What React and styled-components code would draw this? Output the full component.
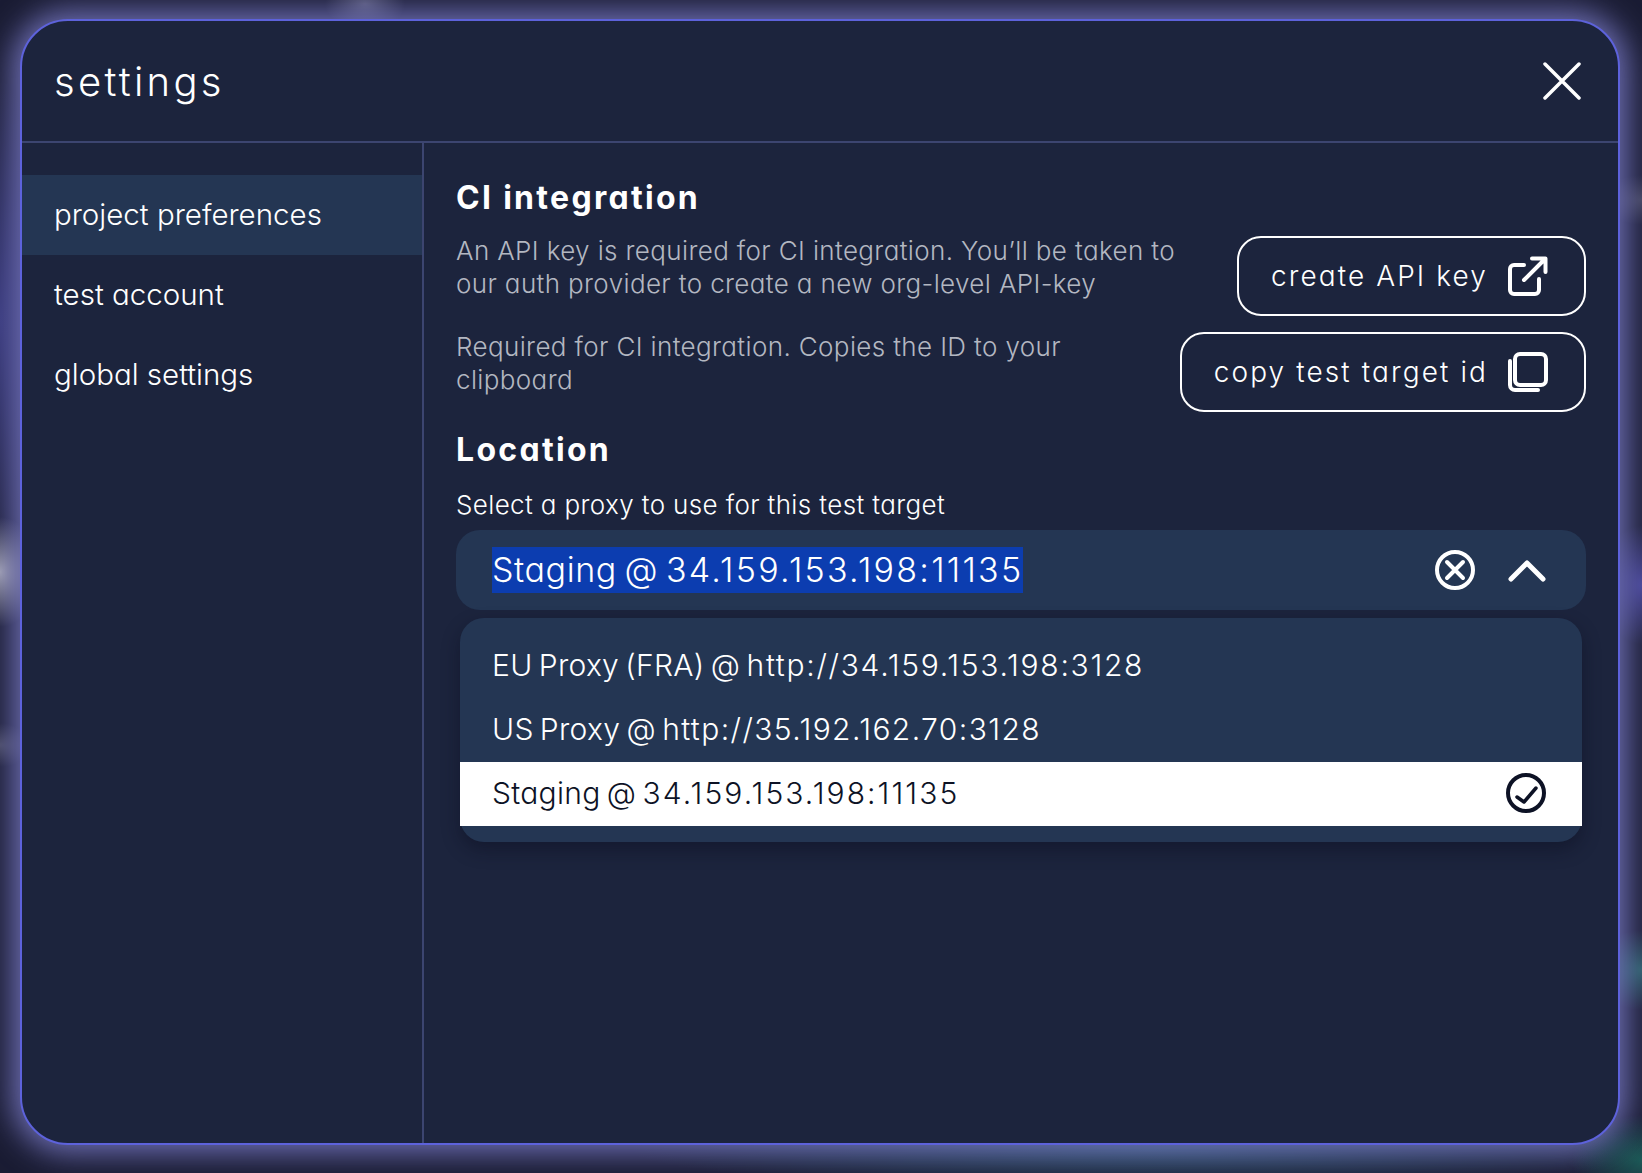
// Packages
import React from "react"
import styled, { createGlobalStyle } from "styled-components"

const FONT = `"Inter", "Lato", "Liberation Sans", sans-serif`

// Styles
const GlobalStyle = createGlobalStyle`
    html, body {
        margin: 0;
        height: 100%;
        background-color: #1a1c33;
        background-image:
            radial-gradient(40px 55px at 0 572px, rgba(205, 205, 215, 0.75), transparent),
            radial-gradient(30px 22px at 0 745px, rgba(170, 170, 190, 0.3), transparent),
            radial-gradient(45px 240px at 0 320px, rgba(70, 70, 170, 0.55), transparent),
            radial-gradient(40px 60px at 1642px 585px, rgba(95, 90, 210, 0.6), transparent),
            radial-gradient(40px 25px at 1642px 200px, rgba(170, 170, 190, 0.25), transparent),
            radial-gradient(40px 26px at 365px 4px, rgba(190, 190, 225, 0.35), transparent),
            radial-gradient(50px 40px at 1642px 970px, rgba(60, 190, 170, 0.4), transparent),
            radial-gradient(70px 45px at 1642px 1160px, rgba(30, 130, 110, 0.6), transparent),
            radial-gradient(520px 40px at 1150px 1150px, rgba(50, 120, 140, 0.45), transparent);
    }

    * {
        box-sizing: border-box;
    }
`

const Page = styled.div`
    width: 1642px;
    height: 1173px;
    padding: 19px 22px 28px 20px;
    overflow: hidden;
    font-family: ${FONT};
    font-feature-settings: "cv11" 1;
    color: #fff;
`

const Modal = styled.div`
    height: 100%;
    display: flex;
    flex-direction: column;
    background-color: #1c243d;
    border: 2px solid #5d62db;
    border-radius: 48px;
    box-shadow: 0 0 30px 8px rgba(130, 130, 210, 0.8);
`

const Header = styled.header`
    height: 122px;
    flex: none;
    display: flex;
    align-items: center;
    justify-content: space-between;
    padding: 0 37px 0 32px;
    border-bottom: 2px solid #3c4570;
`

const Title = styled.h1`
    margin: 0;
    font-size: 40px;
    font-weight: 300;
    letter-spacing: 3.3px;
`

const CloseButton = styled.button`
    display: flex;
    padding: 0;
    border: none;
    background: none;
    color: #fff;
`

const Body = styled.div`
    flex: 1;
    display: flex;
    min-height: 0;
`

const Sidebar = styled.nav`
    width: 402px;
    flex: none;
    padding-top: 32px;
    border-right: 2px solid #3c4570;
`

const NavItem = styled.div`
    height: 80px;
    display: flex;
    align-items: center;
    padding: 0 0 2px 32px;
    font-size: 29.5px;
    font-weight: 300;
    background-color: ${({ $active }) => ($active ? "#243653" : "transparent")};
`

const Content = styled.main`
    flex: 1;
    padding: 35px 32px 0 32px;
`

const SectionTitle = styled.h2`
    margin: 0 0 18px;
    font-size: 32px;
    line-height: 40px;
    font-weight: 700;
    letter-spacing: 2.3px;
`

const Row = styled.div`
    display: flex;
    justify-content: space-between;
    align-items: flex-start;
    margin-bottom: ${({ $gap }) => $gap}px;
`

const Hint = styled.p`
    margin: -2px 0 0;
    width: ${({ $width }) => $width}px;
    font-size: 26px;
    line-height: 33px;
    font-weight: 300;
    letter-spacing: 0.37px;
    color: #b3b7c1;
`

const OutlineButton = styled.button`
    height: 80px;
    display: flex;
    align-items: center;
    gap: 20px;
    padding: 0 36px 0 32px;
    border: 2px solid #fff;
    border-radius: 24px;
    background: none;
    color: #fff;
    font: inherit;
    font-size: 28px;
    font-weight: 300;
    letter-spacing: 2.1px;
`

const Label = styled.div`
    margin-bottom: 9px;
    font-size: 26px;
    line-height: 33px;
    font-weight: 300;
    letter-spacing: 0.37px;
`

const Select = styled.div`
    height: 80px;
    display: flex;
    align-items: center;
    padding: 0 40px 0 36px;
    border-radius: 24px;
    background-color: #243653;
`

const SelectedValue = styled.span`
    height: 46px;
    line-height: 46px;
    margin-right: auto;
    background-color: #0c3db0;
    font-size: 34px;
    font-weight: 300;
    letter-spacing: 0.6px;
    word-spacing: -2.5px;
`

const Address = styled.span`
    letter-spacing: ${({ $spacing }) => $spacing}px;
`

const SelectIcons = styled.div`
    display: flex;
    align-items: center;
    gap: 33px;
    color: #fff;
`

const Menu = styled.div`
    margin: 8px 4px 0;
    padding: 16px 0;
    border-radius: 24px;
    background-color: #243653;
    box-shadow: 0 8px 18px rgba(12, 14, 30, 0.45);
`

const Option = styled.div`
    height: 64px;
    display: flex;
    align-items: center;
    justify-content: space-between;
    padding: 0 36px 2px 32px;
    font-size: 30px;
    font-weight: 300;
    letter-spacing: 0.3px;
    word-spacing: -2.5px;
    background-color: ${({ $selected }) => ($selected ? "#fff" : "transparent")};
    color: ${({ $selected }) => ($selected ? "#0d1225" : "#fff")};
`

// Icons
const Icon = ({ children }) => (
    <svg
        width="40"
        height="40"
        viewBox="0 0 40 40"
        fill="none"
        stroke="currentColor"
        strokeWidth="4"
        strokeLinecap="round"
        strokeLinejoin="round"
    >
        {children}
    </svg>
)

const CloseIcon = () => (
    <svg width="38" height="38" viewBox="0 0 38 38" fill="none" stroke="currentColor" strokeWidth="3.5" strokeLinecap="round">
        <path d="M2 2 L36 36 M36 2 L2 36" />
    </svg>
)

const ExternalIcon = () => (
    <Icon>
        <path d="M16 9 H6 a4 4 0 0 0 -4 4 V34 a4 4 0 0 0 4 4 H27 a4 4 0 0 0 4 -4 V23" />
        <path d="M16 24 L37 3 M24 2.5 H37.5 V16" />
    </Icon>
)

const CopyIcon = () => (
    <Icon>
        <rect x="7" y="2" width="31" height="31" rx="5" />
        <path d="M2 9 V33 a5 5 0 0 0 5 5 H30" />
    </Icon>
)

const ClearIcon = () => (
    <Icon>
        <circle cx="20" cy="20" r="18" />
        <path d="M12 12 L28 28 M28 12 L12 28" />
    </Icon>
)

const ChevronIcon = () => (
    <svg width="38" height="24" viewBox="0 0 38 24" fill="none" stroke="currentColor" strokeWidth="5" strokeLinecap="round" strokeLinejoin="round">
        <path d="M3 21 L19 5 L35 21" />
    </svg>
)

const CheckIcon = () => (
    <Icon>
        <circle cx="20" cy="20" r="18" />
        <path d="M11 24 L18 29 L30 15" strokeWidth="3.5" />
    </Icon>
)

const App = () => {
    return (
        <Page>
            <GlobalStyle />

            <Modal>
                <Header>
                    <Title>settings</Title>
                    <CloseButton aria-label="Close">
                        <CloseIcon />
                    </CloseButton>
                </Header>

                <Body>
                    <Sidebar>
                        <NavItem $active>project preferences</NavItem>
                        <NavItem>test account</NavItem>
                        <NavItem>global settings</NavItem>
                    </Sidebar>

                    <Content>
                        <SectionTitle>CI integration</SectionTitle>

                        <Row $gap={16}>
                            <Hint $width={730}>
                                An API key is required for CI integration. You’ll be taken to our auth provider to create a new org-level API-key
                            </Hint>
                            <OutlineButton>
                                create API key
                                <ExternalIcon />
                            </OutlineButton>
                        </Row>

                        <Row $gap={18}>
                            <Hint $width={640}>
                                Required for CI integration. Copies the ID to your clipboard
                            </Hint>
                            <OutlineButton>
                                copy test target id
                                <CopyIcon />
                            </OutlineButton>
                        </Row>

                        <SectionTitle>Location</SectionTitle>
                        <Label>Select a proxy to use for this test target</Label>

                        <Select>
                            <SelectedValue>
                                Staging @ <Address $spacing={2.25}>34.159.153.198:11135</Address>
                            </SelectedValue>
                            <SelectIcons>
                                <ClearIcon />
                                <ChevronIcon />
                            </SelectIcons>
                        </Select>

                        <Menu>
                            <Option>
                                <span>
                                    EU Proxy (FRA) @ <Address $spacing={1.7}>http://34.159.153.198:3128</Address>
                                </span>
                            </Option>
                            <Option>
                                <span>
                                    US Proxy @ <Address $spacing={1.4}>http://35.192.162.70:3128</Address>
                                </span>
                            </Option>
                            <Option $selected>
                                <span>
                                    Staging @ <Address $spacing={2.05}>34.159.153.198:11135</Address>
                                </span>
                                <CheckIcon />
                            </Option>
                        </Menu>
                    </Content>
                </Body>
            </Modal>
        </Page>
    )
}

export default App
